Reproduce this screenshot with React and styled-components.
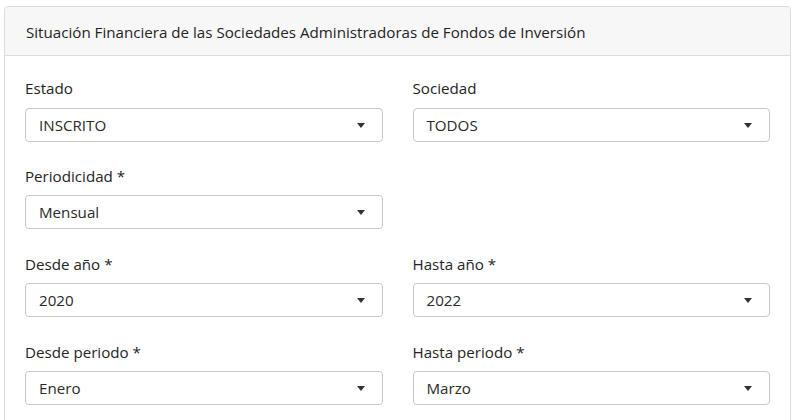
import React from "react";
import styled, { createGlobalStyle } from "styled-components";

const Global = createGlobalStyle`
  * { box-sizing: border-box; }
  body {
    margin: 0;
    background: #fff;
    font-family: "Open Sans", "Noto Sans", "Liberation Sans", sans-serif;
    font-size: 15.15px;
    color: #212529;
  }
`;

const Page = styled.div`
  padding: 6px 3px 0 4px;
`;

const Card = styled.section`
  border: 1px solid #dcdcdc;
  border-radius: 4px;
  background: #fff;
`;

const CardHeader = styled.header`
  height: 49px;
  display: flex;
  align-items: center;
  padding: 1px 20px 0 21px;
  background: #f7f7f7;
  border-bottom: 1px solid #dcdcdc;
  border-radius: 4px 4px 0 0;
  color: #1f2326;
`;

const CardBody = styled.div`
  padding: 21px 20px 0 20px;
  display: grid;
  grid-template-columns: 1fr 1fr;
  column-gap: 30px;
`;

const Group = styled.div`
  display: flex;
  flex-direction: column;
  margin-bottom: 23.4px;
`;

const Label = styled.label`
  line-height: 22.5px;
  margin-bottom: 8px;
  color: #1f2326;
`;

const SelectBox = styled.div`
  position: relative;
  height: 34px;
  border: 1px solid #c8c8c8;
  border-radius: 4px;
  display: flex;
  align-items: center;
  padding: 0 40px 0 13px;
  color: #2a2a2a;
  background: #fff;
`;

const Arrow = styled.span`
  position: absolute;
  right: 17px;
  top: 50%;
  margin-top: -2px;
  width: 0;
  height: 0;
  border-style: solid;
  border-width: 5px 4px 0 4px;
  border-color: #333 transparent transparent transparent;
`;

const Spacer = styled.div``;

const Field = ({ label, value }) => (
  <Group>
    <Label>{label}</Label>
    <SelectBox>
      {value}
      <Arrow />
    </SelectBox>
  </Group>
);

export default function App() {
  return (
    <Page>
      <Global />
      <Card>
        <CardHeader>
          Situación Financiera de las Sociedades Administradoras de Fondos de Inversión
        </CardHeader>
        <CardBody>
          <Field label="Estado" value="INSCRITO" />
          <Field label="Sociedad" value="TODOS" />
          <Field label="Periodicidad *" value="Mensual" />
          <Spacer />
          <Field label="Desde año *" value="2020" />
          <Field label="Hasta año *" value="2022" />
          <Field label="Desde periodo *" value="Enero" />
          <Field label="Hasta periodo *" value="Marzo" />
        </CardBody>
      </Card>
    </Page>
  );
}
